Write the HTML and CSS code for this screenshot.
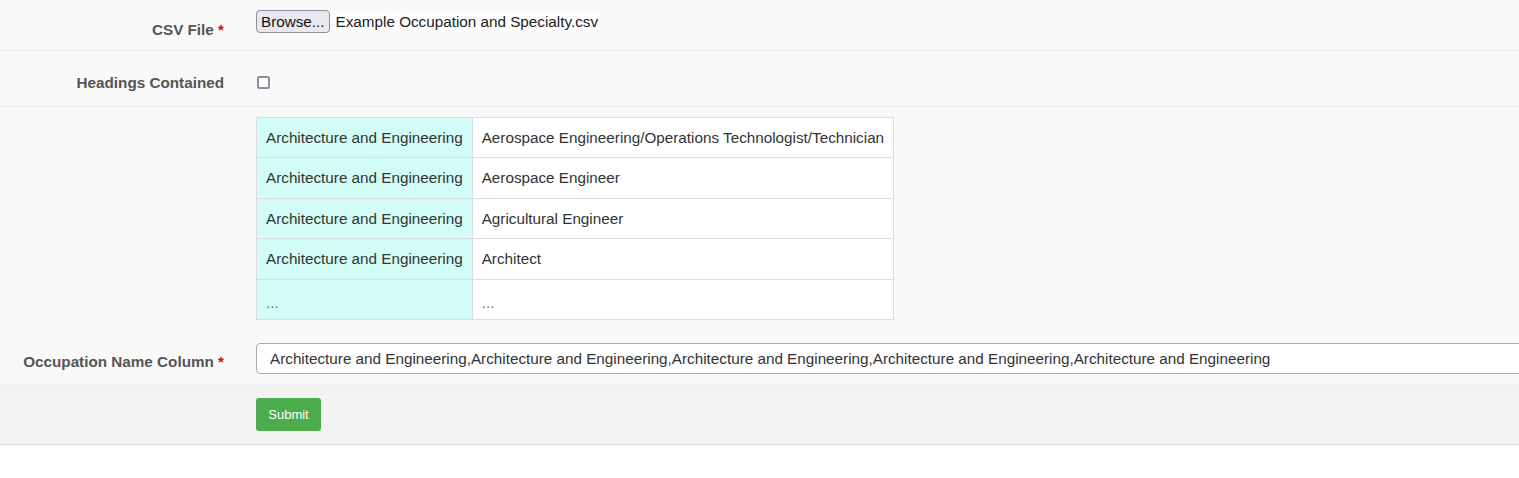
FILE: index.html
```html
<!DOCTYPE html>
<html>
<head>
<meta charset="utf-8">
<link rel="stylesheet" href="styles.css">
</head>
<body>
<form class="form">
  <div class="row row-file">
    <label class="lbl">CSV File <span class="req">*</span></label>
    <div class="ctl">
      <span class="file">
        <span class="browse">Browse...</span><span class="fname">Example Occupation and Specialty.csv</span>
      </span>
    </div>
  </div>
  <div class="row row-check">
    <label class="lbl">Headings Contained</label>
    <div class="ctl"><input type="checkbox" class="chk"></div>
  </div>
  <div class="row row-table">
    <div class="lbl"></div>
    <div class="ctl">
      <table class="preview">
        <tr><td class="c1">Architecture and Engineering</td><td class="c2">Aerospace Engineering/Operations Technologist/Technician</td></tr>
        <tr><td class="c1">Architecture and Engineering</td><td class="c2">Aerospace Engineer</td></tr>
        <tr><td class="c1">Architecture and Engineering</td><td class="c2">Agricultural Engineer</td></tr>
        <tr><td class="c1">Architecture and Engineering</td><td class="c2">Architect</td></tr>
        <tr class="more"><td class="c1">...</td><td class="c2">...</td></tr>
      </table>
    </div>
  </div>
  <div class="row row-select">
    <label class="lbl">Occupation Name Column <span class="req">*</span></label>
    <div class="ctl">
      <div class="select">Architecture and Engineering,Architecture and Engineering,Architecture and Engineering,Architecture and Engineering,Architecture and Engineering</div>
    </div>
  </div>
  <div class="row row-actions">
    <div class="lbl"></div>
    <div class="ctl"><button type="button" class="submit">Submit</button></div>
  </div>
</form>
</body>
</html>
```

FILE: styles.css
```css
html, body {
  margin: 0;
  padding: 0;
  background: #fff;
  font-family: "Liberation Sans", Arial, sans-serif;
  font-size: 15.25px;
  color: #333;
  overflow: hidden;
}

.form {
  width: 1519px;
}

.row {
  display: grid;
  grid-template-columns: 224px 1fr;
  column-gap: 32px;
  background: #f9f9f9;
  border-bottom: 1px solid #eee;
  box-sizing: border-box;
}

.lbl {
  text-align: right;
  font-weight: bold;
  color: #555;
  font-size: 15.25px;
  line-height: 17px;
}

.req {
  color: #e00;
}

.ctl {
  min-width: 0;
  overflow: hidden;
}

/* row 1 */
.row-file {
  height: 51px;
}
.row-file .lbl {
  padding-top: 21px;
}
.row-file .ctl {
  padding-top: 10px;
}
.file {
  display: inline-flex;
  align-items: center;
  background: #fdfdfd;
  height: 23px;
  padding-right: 1px;
}
.browse {
  display: inline-block;
  box-sizing: border-box;
  height: 23px;
  line-height: 21px;
  padding: 0 4px;
  background: #e9e9ed;
  border: 1px solid #8f8f9d;
  border-radius: 4px;
  color: #111;
  font-size: 15.25px;
}
.fname {
  padding-left: 6px;
  color: #222;
  font-size: 15.25px;
}

/* row 2 */
.row-check {
  height: 56px;
}
.row-check .lbl {
  padding-top: 23px;
}
.row-check .ctl {
  padding-top: 22px;
}
.chk {
  margin: 3px 3px 3px 1px;
  width: 13px;
  height: 13px;
  appearance: none;
  -webkit-appearance: none;
  box-sizing: border-box;
  border: 2px solid #8f8f9d;
  border-radius: 2px;
  background: #fff;
  display: block;
}

/* row 3 */
.row-table {
  padding: 10px 0 11px;
  border-bottom: 1px solid #fff;
}
.preview {
  border-collapse: collapse;
  font-size: 15.25px;
}
.preview td {
  border: 1px solid #ddd;
  padding: 9px 9px;
  line-height: 21.4px;
  white-space: nowrap;
  color: #333;
}
.preview .c1 {
  background: #d1fdf6;
}
.preview .c2 {
  background: #fff;
  width: 402px;
}
.preview .more td {
  padding-top: 12px;
  padding-bottom: 6px;
  color: #777;
}

/* row 4 */
.row-select {
  height: 53px;
}
.row-select .lbl {
  padding-top: 21px;
}
.row-select .ctl {
  padding-top: 11px;
  overflow: visible;
}
.select {
  box-sizing: border-box;
  width: 1300px;
  height: 31px;
  line-height: 29px;
  padding-left: 13px;
  border: 1px solid #aaa;
  border-radius: 4px;
  background: #fff;
  color: #333;
  white-space: nowrap;
  font-size: 15.25px;
}

/* row 5 */
.row-actions {
  height: 60px;
  background: #f3f3f3;
  border-bottom: 1px solid #ddd;
}
.row-actions .ctl {
  padding-top: 13px;
}
.submit {
  width: 65px;
  height: 33px;
  border: 0;
  border-radius: 3px;
  background: #4cab4a;
  color: #fff;
  font-family: "Liberation Sans", Arial, sans-serif;
  font-size: 13px;
  padding: 0;
}
```
